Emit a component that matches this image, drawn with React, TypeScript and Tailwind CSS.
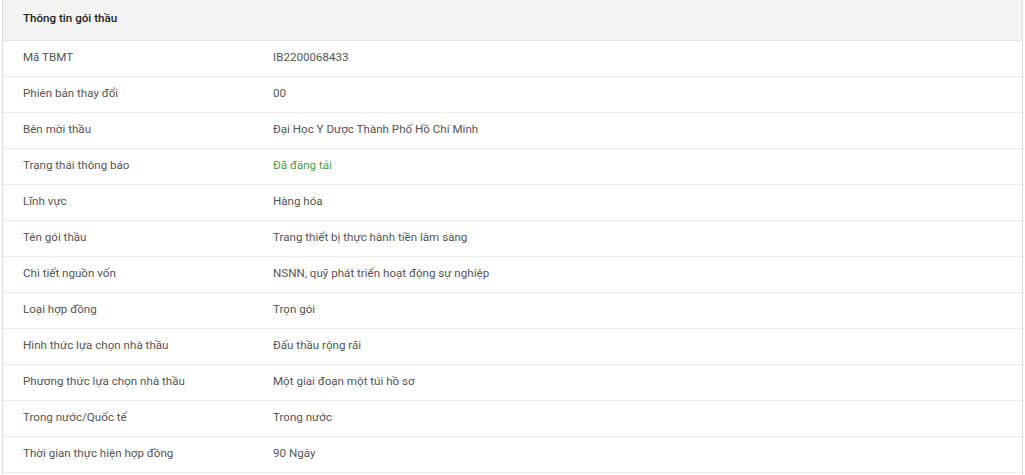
import * as React from 'react';

const rows: { label: string; value: string; green?: boolean }[] = [
    { label: 'Mã TBMT', value: 'IB2200068433' },
    { label: 'Phiên bản thay đổi', value: '00' },
    { label: 'Bên mời thầu', value: 'Đại Học Y Dược Thành Phố Hồ Chí Minh' },
    { label: 'Trạng thái thông báo', value: 'Đã đăng tải', green: true },
    { label: 'Lĩnh vực', value: 'Hàng hóa' },
    { label: 'Tên gói thầu', value: 'Trang thiết bị thực hành tiền lâm sàng' },
    { label: 'Chi tiết nguồn vốn', value: 'NSNN, quỹ phát triển hoạt động sự nghiệp' },
    { label: 'Loại hợp đồng', value: 'Trọn gói' },
    { label: 'Hình thức lựa chọn nhà thầu', value: 'Đấu thầu rộng rãi' },
    { label: 'Phương thức lựa chọn nhà thầu', value: 'Một giai đoạn một túi hồ sơ' },
    { label: 'Trong nước/Quốc tế', value: 'Trong nước' },
    { label: 'Thời gian thực hiện hợp đồng', value: '90 Ngày' },
];

export default function App() {
    return (
        <div className="h-[475px] bg-white px-[2px] font-['Roboto',sans-serif] text-[11.6px]">
            <div className="h-full border-x border-[#dcdcdc]">
                <div className="h-[41px] pb-[3px] bg-[#f3f3f3] border-b border-[#e6e6e6] flex items-center px-5 font-medium text-[#222]">
                    Thông tin gói thầu
                </div>
                {rows.map((r) => (
                    <div key={r.label} className="h-[36px] pb-[2px] grid grid-cols-[250px_1fr] items-center border-b border-[#ebebeb] text-[#555]">
                        <div className="px-5">{r.label}</div>
                        <div className={r.green ? 'px-5 text-[#3fa34d]' : 'px-5'}>{r.value}</div>
                    </div>
                ))}
            </div>
        </div>
    );
}
